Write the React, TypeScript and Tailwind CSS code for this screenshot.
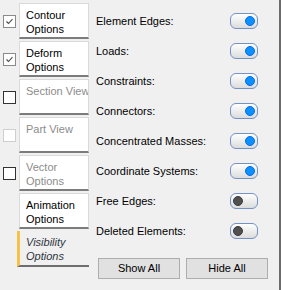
type Tab = {
  label: [string, string?];
  check: "on" | "off" | "disabled" | null;
  dim?: boolean;
  active?: boolean;
};

const tabs: Tab[] = [
  { label: ["Contour", "Options"], check: "on" },
  { label: ["Deform", "Options"], check: "on" },
  { label: ["Section View"], check: "off", dim: true },
  { label: ["Part View"], check: "disabled", dim: true },
  { label: ["Vector", "Options"], check: "off", dim: true },
  { label: ["Animation", "Options"], check: null },
  { label: ["Visibility", "Options"], check: null, active: true },
];

const rows: { name: string; on: boolean }[] = [
  { name: "Element Edges:", on: true },
  { name: "Loads:", on: true },
  { name: "Constraints:", on: true },
  { name: "Connectors:", on: true },
  { name: "Concentrated Masses:", on: true },
  { name: "Coordinate Systems:", on: true },
  { name: "Free Edges:", on: false },
  { name: "Deleted Elements:", on: false },
];

function CheckBox({ state }: { state: Tab["check"] }) {
  if (!state) return null;
  const border =
    state === "on"
      ? "border-[#8a8a8a]"
      : state === "disabled"
      ? "border-[#cfcfcf]"
      : "border-[#333333]";
  return (
    <div className={`w-[13px] h-[13px] border bg-white flex items-center justify-center ${border}`}>
      {state === "on" && (
        <svg width="9" height="9" viewBox="0 0 9 9">
          <path d="M1.5 4.5 L3.5 6.5 L7.5 2.2" fill="none" stroke="#4a4a4a" strokeWidth="1.1" />
        </svg>
      )}
    </div>
  );
}

function Toggle({ on }: { on: boolean }) {
  return (
    <div className="relative w-[28px] h-[16px] rounded-[6px] border border-[#7391c4] bg-gradient-to-b from-[#ffffff] to-[#dcdcdc]">
      <div
        className={
          on
            ? "absolute top-[2px] right-[2px] w-[10px] h-[10px] rounded-full bg-[#0a91ff] border border-[#0a6ae0]"
            : "absolute top-[2px] left-[2px] w-[10px] h-[10px] rounded-full bg-[#505050] border border-[#3c3c3c]"
        }
      />
    </div>
  );
}

export default function App() {
  return (
    <div
      className="w-[281px] h-[290px] bg-[#f0f0f0] flex text-[11px] text-black"
      style={{ fontFamily: '"Liberation Sans", Arial, sans-serif' }}
    >
      <div className="w-[89px] flex flex-col gap-[2px] pt-[3px]">
        {tabs.map((t, i) => (
          <div key={i} className="flex items-center h-[36px]">
            <div className="w-[17px] pl-[3px]">
              <CheckBox state={t.check} />
            </div>
            {t.active ? (
              <div className="flex-1 h-full bg-[#f0f0f0] border-l-[3px] border-[#f7c24a] border-b-2 border-b-[#6e6e6e] pl-[6px] pt-[4px] leading-[14px] italic text-[#2e3440]">
                <div>{t.label[0]}</div>
                <div>{t.label[1]}</div>
              </div>
            ) : (
              <div
                className={`flex-1 ml-[2px] h-full bg-white border border-[#dadada] border-b-2 border-b-[#7c7c7c] pl-[6px] pt-[4px] leading-[14px] whitespace-nowrap overflow-hidden ${
                  t.dim ? "text-[#8c8c8c]" : "text-black"
                }`}
              >
                <div>{t.label[0]}</div>
                {t.label[1] && <div>{t.label[1]}</div>}
              </div>
            )}
          </div>
        ))}
      </div>

      <div className="flex-1 flex flex-col pt-[6px] border-r-2 border-[#6b6b6b]">
        {rows.map((r) => (
          <div key={r.name} className="h-[30px] flex items-center justify-between pl-[7px] pr-[21px]">
            <span>{r.name}</span>
            <Toggle on={r.on} />
          </div>
        ))}
        <div className="flex gap-[6px] pl-[9px] mt-[12px]">
          <button className="w-[82px] h-[21px] bg-[#e1e1e1] border border-[#adadad] text-[11px]">
            Show All
          </button>
          <button className="w-[82px] h-[21px] bg-[#e1e1e1] border border-[#adadad] text-[11px]">
            Hide All
          </button>
        </div>
      </div>
    </div>
  );
}
